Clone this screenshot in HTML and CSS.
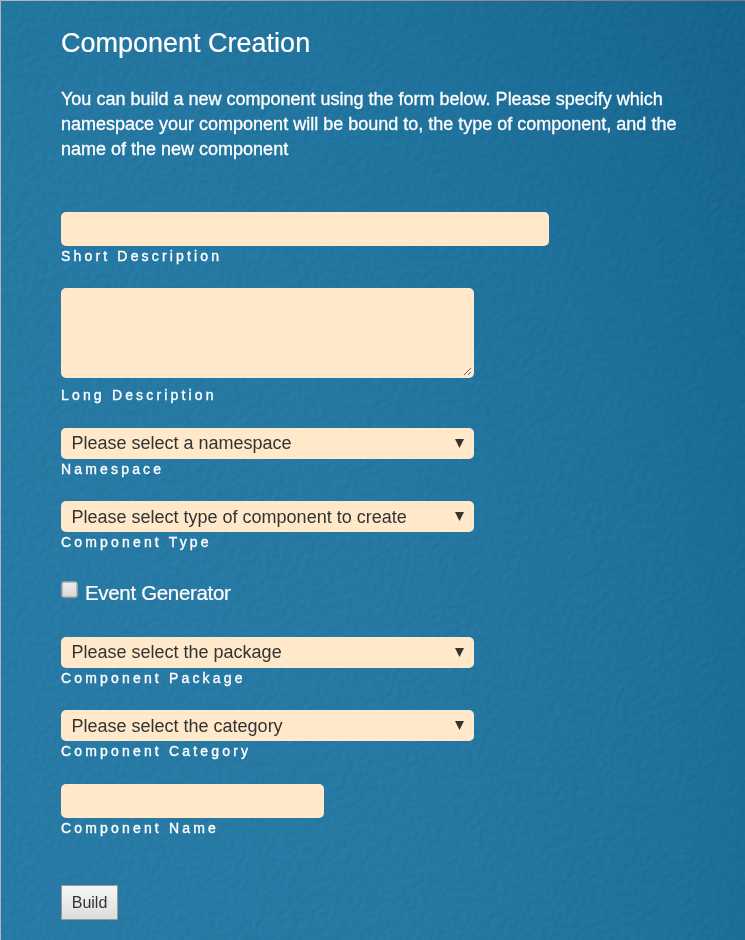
FILE: index.html
```html
<!DOCTYPE html>
<html lang="en">
<head>
<meta charset="utf-8">
<title>Component Creation</title>
<link rel="stylesheet" href="styles.css">
</head>
<body>
<main class="panel">
  <svg class="texture" width="744" height="939" aria-hidden="true">
    <filter id="leather" x="0" y="0" width="100%" height="100%" color-interpolation-filters="sRGB">
      <feTurbulence type="fractalNoise" baseFrequency="0.16" numOctaves="2" seed="8" result="noise"/>
      <feDiffuseLighting in="noise" surfaceScale="1.1" diffuseConstant="0.71" lighting-color="#fff">
        <feDistantLight azimuth="225" elevation="45"/>
      </feDiffuseLighting>
    </filter>
    <rect width="744" height="939" filter="url(#leather)"/>
  </svg>
  <h1 class="title">Component Creation</h1>
  <p class="intro">You can build a new component using the form below. Please specify which namespace your component will be bound to, the type of component, and the name of the new component</p>
  <form class="form">
    <div class="field">
      <input class="control text wide" id="short" type="text">
      <label class="caption" for="short">Short Description</label>
    </div>
    <div class="field field-long">
      <textarea class="control area" id="long"></textarea>
      <label class="caption" for="long">Long Description</label>
    </div>
    <div class="field field-namespace">
      <div class="control select"><span>Please select a namespace</span><svg class="arrow" width="9" height="9"><path d="M0 0H9L4.5 9Z"/></svg></div>
      <div class="caption">Namespace</div>
    </div>
    <div class="field field-type">
      <div class="control select"><span>Please select type of component to create</span><svg class="arrow" width="9" height="9"><path d="M0 0H9L4.5 9Z"/></svg></div>
      <div class="caption">Component Type</div>
    </div>
    <div class="check"><span class="box"></span><span class="check-label">Event Generator</span></div>
    <div class="field field-package">
      <div class="control select"><span>Please select the package</span><svg class="arrow" width="9" height="9"><path d="M0 0H9L4.5 9Z"/></svg></div>
      <div class="caption">Component Package</div>
    </div>
    <div class="field field-category">
      <div class="control select"><span>Please select the category</span><svg class="arrow" width="9" height="9"><path d="M0 0H9L4.5 9Z"/></svg></div>
      <div class="caption">Component Category</div>
    </div>
    <div class="field">
      <input class="control text narrow" id="name" type="text">
      <label class="caption" for="name">Component Name</label>
    </div>
    <button class="build" type="button">Build</button>
  </form>
</main>
</body>
</html>
```
FILE: styles.css
```css
* { box-sizing: border-box; }
body {
  margin: 0;
  height: 940px;
  overflow: hidden;
  padding: 1px 0 0 1px;
  background: linear-gradient(90deg, #b5b5b5, #777);
  font-family: "Liberation Sans", Arial, sans-serif;
}
.panel {
  position: relative;
  isolation: isolate;
  height: 939px;
  padding: 25px 60px 0;
  overflow: hidden;
  color: #fff;
  background: radial-gradient(ellipse 1000px 1500px at -80px 900px, #287ba6 0%, #2679a3 50%, #1f729c 75%, #15658f 100%);
}
.texture {
  position: absolute;
  inset: 0;
  z-index: -1;
  mix-blend-mode: soft-light;
  opacity: .22;
}
.title {
  margin: 0;
  font-size: 27px;
  line-height: 34px;
  font-weight: 400;
  -webkit-text-stroke: .2px #fff;
}
.intro {
  width: 625px;
  margin: 27px 0 0;
  font-size: 18px;
  line-height: 25px;
  -webkit-text-stroke: .3px #fff;
}
.form { margin-top: 50px; }
.field { height: 76px; }
.field-long { height: 140px; }
.field-namespace,
.field-package { height: 73px; }
.field-type { height: 79px; }
.field-category { height: 74px; }
.control {
  display: block;
  margin: 0;
  border: 0;
  border-radius: 5px;
  background: #ffe9ca;
  color: #333;
}
.text { height: 34px; }
.wide { width: 488px; }
.narrow { width: 263px; }
.area {
  width: 413px;
  height: 90px;
  border: 2px solid #ffe9ca;
  resize: both;
}
.select {
  display: flex;
  align-items: center;
  justify-content: space-between;
  width: 413px;
  height: 31px;
  padding: 0 10px 0 10.5px;
  font-size: 18px;
  line-height: 30px;
}
.field-namespace span,
.field-package span { padding-bottom: 2px; }
.arrow { fill: #333; }
.caption {
  display: block;
  font-size: 14px;
  line-height: 20px;
  letter-spacing: 3.17px;
  -webkit-text-stroke: .35px #fff;
}
.field-long .caption { margin-top: 7px; }
.check {
  display: flex;
  height: 57px;
  gap: 7px;
}
.box {
  width: 17px;
  height: 17px;
  margin-top: 1px;
  border: 1px solid #999;
  border-radius: 3px;
  background: linear-gradient(#eee, #d8d8d8);
  box-shadow: inset 0 0 0 1px #bbb;
}
.check-label {
  font-size: 20.5px;
  line-height: 26px;
  letter-spacing: -.33px;
  -webkit-text-stroke: .2px #fff;
}
.build {
  display: block;
  width: 57px;
  height: 35px;
  margin: 25px 0 0;
  padding: 0;
  border: 1px solid #999;
  background: linear-gradient(#f6f6f6, #ddd);
  color: #333;
  font: 16px "Liberation Sans", Arial, sans-serif;
}
```
